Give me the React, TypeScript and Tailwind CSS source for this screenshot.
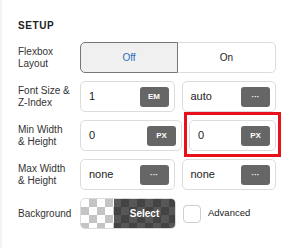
import React from 'react';

const font = { fontFamily: '"Liberation Sans", Arial, sans-serif' };

function UnitInput({ value, unit }: { value: string; unit: string }) {
  return (
    <div className="flex h-[31px] flex-1 items-center justify-between rounded-[5px] border border-[#dcdcdc] bg-white pl-2 pr-[5px]">
      <span className="text-[11px] text-[#222]">{value}</span>
      <span className="flex h-[20px] w-[29px] items-center justify-center rounded-[3px] bg-[#666666] text-[8px] font-bold text-white">
        {unit}
      </span>
    </div>
  );
}

function Row({ label, children }: { label: React.ReactNode; children: React.ReactNode }) {
  return (
    <div className="flex h-[31px] items-center">
      <div className="w-[62px] text-[10px] leading-[12px] text-[#333]">{label}</div>
      <div className="flex w-[196px] gap-[7px]">{children}</div>
    </div>
  );
}

export default function App() {
  return (
    <div
      className="h-[248px] w-[289px] border-l-2 border-[#f4f4f4] bg-white pl-4 pt-[20px]"
      style={font}
    >
      <div className="text-[10px] font-bold leading-[12px] tracking-[0.6px] text-[#222]">SETUP</div>

      <div className="mt-[10px] flex flex-col gap-2">
        <Row
          label={
            <>
              Flexbox
              <br />
              Layout
            </>
          }
        >
          <div className="flex h-[31px] w-[196px]">
            <div className="flex w-[98px] items-center justify-center rounded-l-[5px] border border-[#777] bg-[#f0f0f0] text-[10px] text-[#2b6fbd]">
              Off
            </div>
            <div className="flex flex-1 items-center justify-center rounded-r-[5px] border border-l-0 border-[#dcdcdc] text-[10px] text-[#222]">
              On
            </div>
          </div>
        </Row>

        <Row
          label={
            <>
              Font Size &amp;
              <br />
              Z-Index
            </>
          }
        >
          <UnitInput value="1" unit="EM" />
          <UnitInput value="auto" unit="···" />
        </Row>

        <Row
          label={
            <>
              Min Width
              <br />
              &amp; Height
            </>
          }
        >
          <UnitInput value="0" unit="PX" />
          <div className="relative flex flex-1">
            <UnitInput value="0" unit="PX" />
            <div className="pointer-events-none absolute -bottom-[6px] -left-[5px] -right-[5px] -top-[8px] border-[3px] border-[#e8101a]" />
          </div>
        </Row>

        <Row
          label={
            <>
              Max Width
              <br />
              &amp; Height
            </>
          }
        >
          <UnitInput value="none" unit="···" />
          <UnitInput value="none" unit="···" />
        </Row>

        <Row label="Background">
          <div className="relative flex h-[31px] w-[96px] overflow-hidden rounded-[5px] border border-[#dcdcdc] bg-[repeating-conic-gradient(#c4c4c4_0_25%,#ffffff_0_50%)] bg-[length:16px_16px]">
            <div className="absolute bottom-0 left-[33px] right-0 top-0 flex items-center justify-center bg-black/[0.66] text-[10px] font-bold text-white">
              Select
            </div>
          </div>
          <div className="flex items-center gap-[7px]">
            <div className="h-[18px] w-[18px] rounded-[4px] border border-[#cfcfcf] bg-white" />
            <span className="text-[9.5px] text-[#222]">Advanced</span>
          </div>
        </Row>
      </div>
    </div>
  );
}
